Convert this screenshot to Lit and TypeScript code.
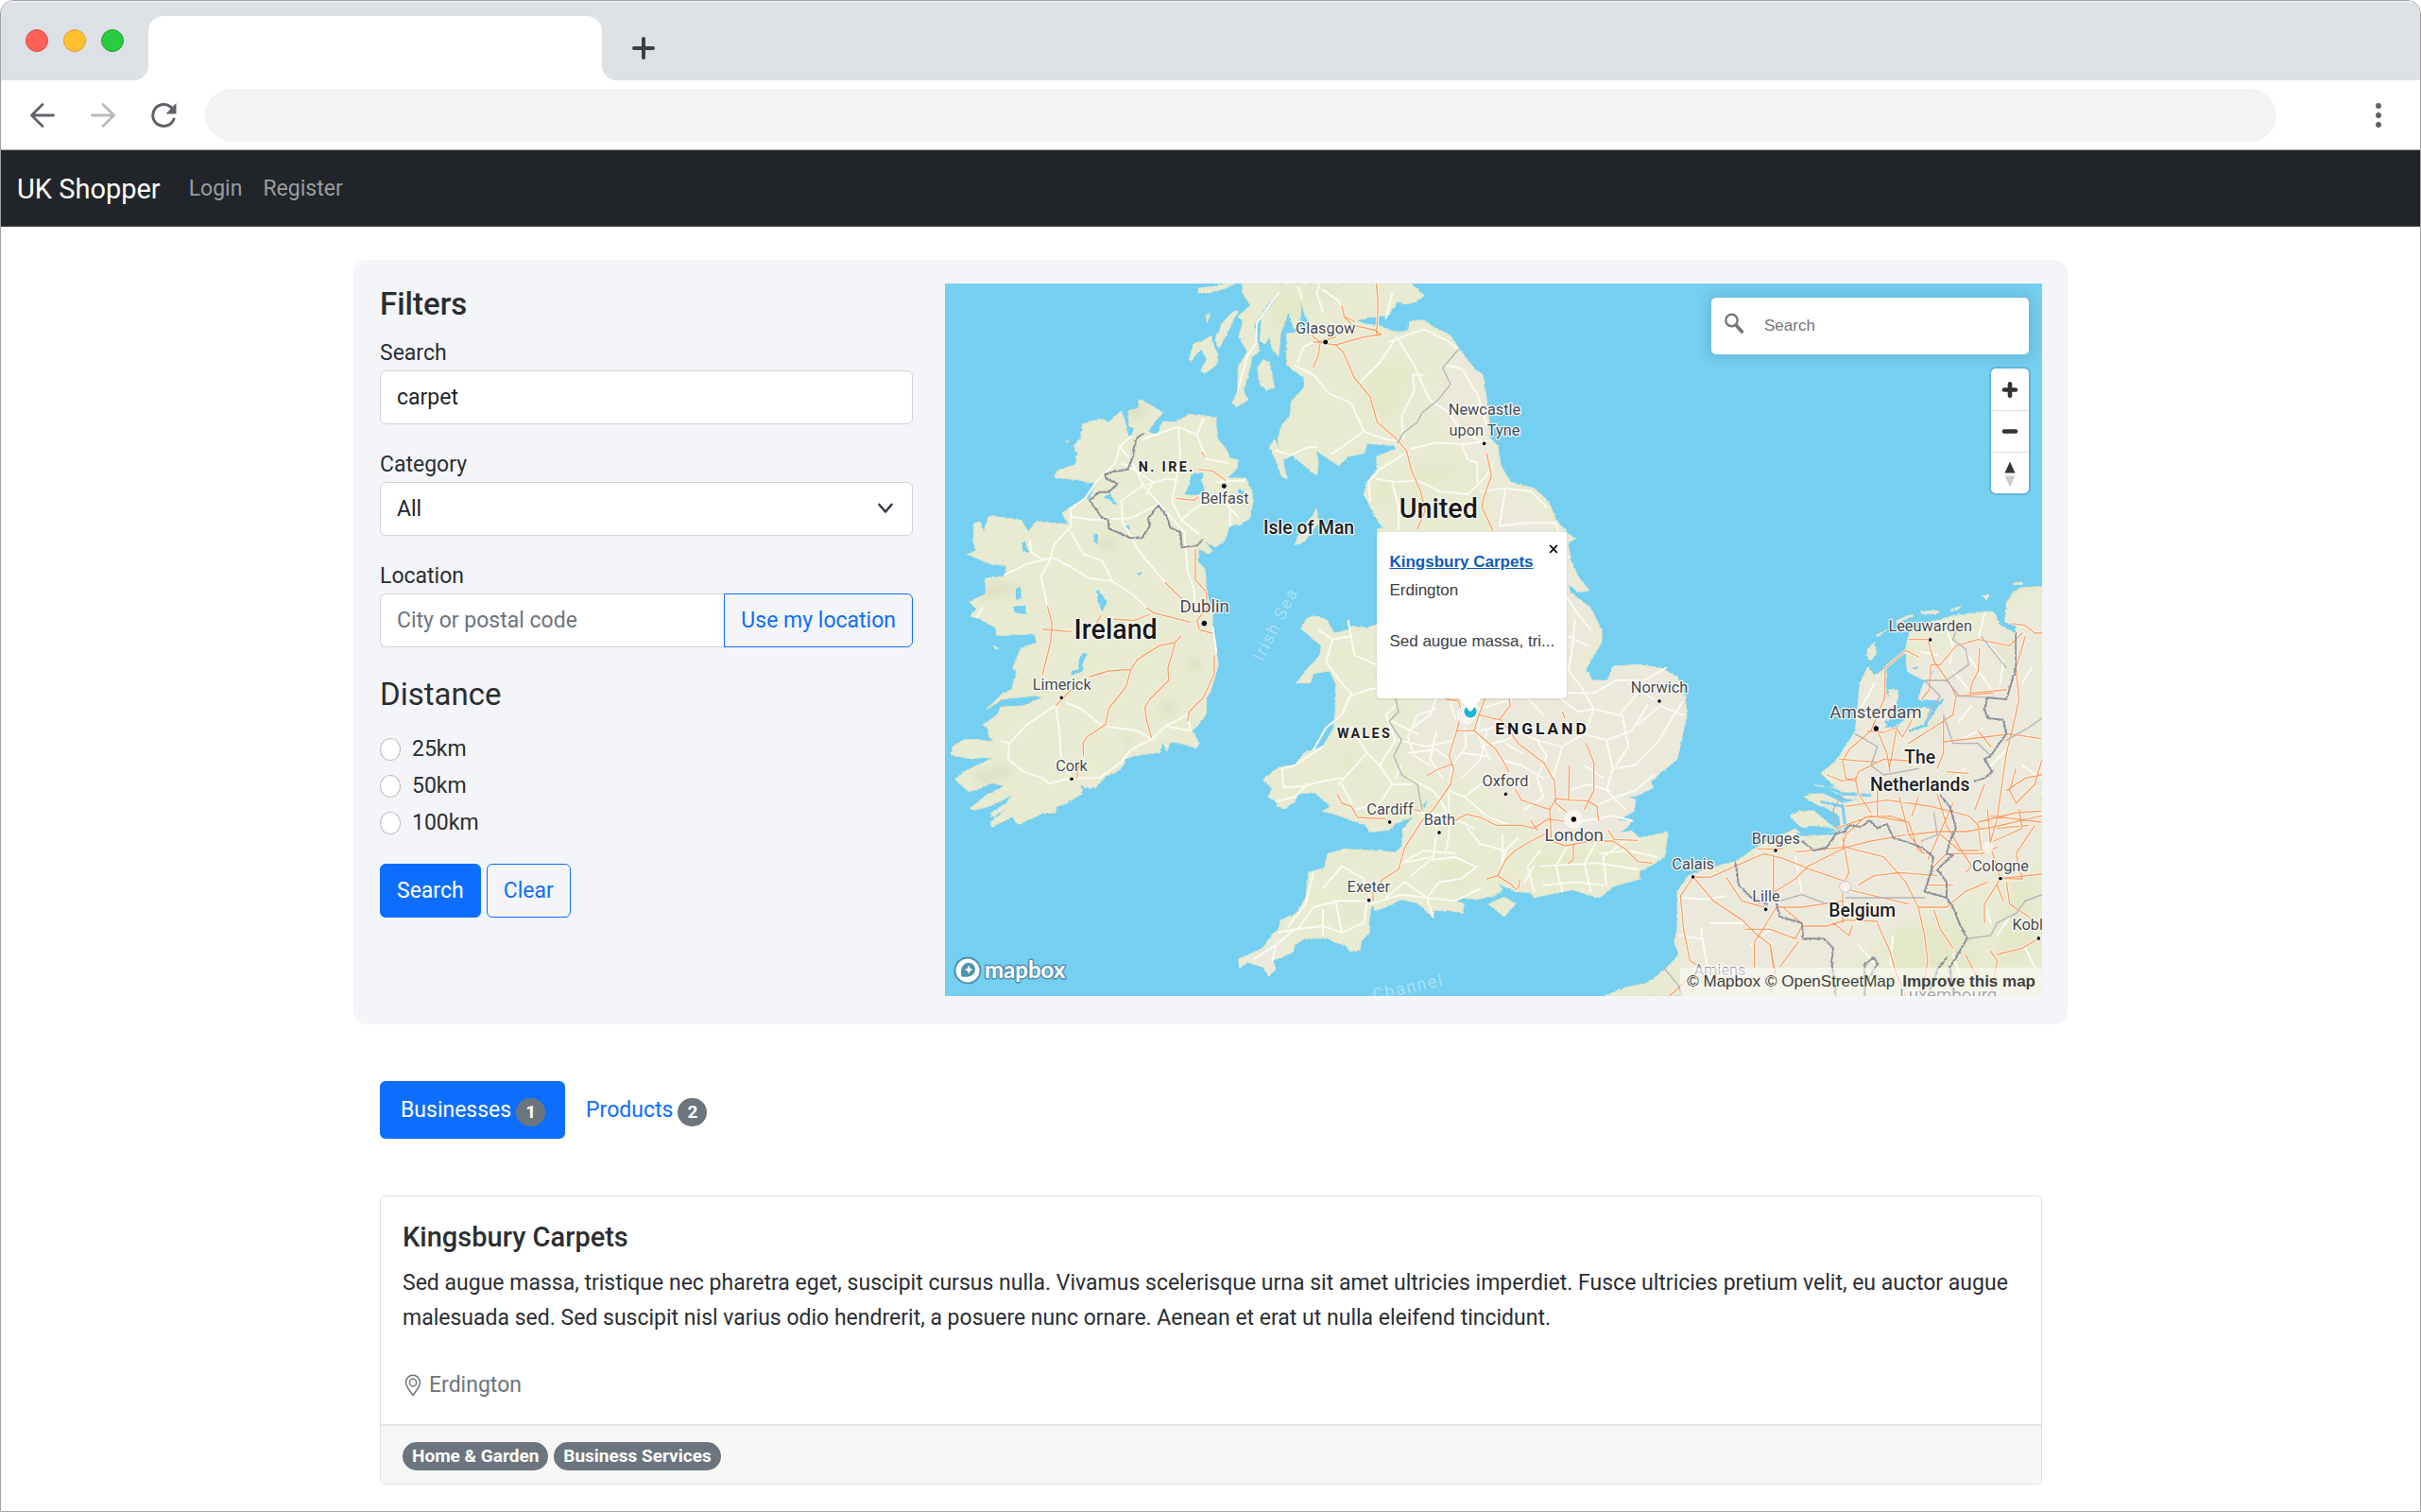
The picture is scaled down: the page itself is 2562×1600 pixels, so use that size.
import { LitElement, html, svg, css } from "lit";
import { customElement } from "lit/decorators.js";

type Kind = "city" | "big" | "isle" | "country" | "region" | "nation" | "faint";

interface MapLabel {
  text: string;
  x: number;
  y: number;
  kind: Kind;
}

const LABELS: MapLabel[] = [
  { text: "Glasgow", x: 1208, y: 188, kind: "city" },
  { text: "Newcastle", x: 1713, y: 448, kind: "city" },
  { text: "upon Tyne", x: 1713, y: 513, kind: "city" },
  { text: "N. IRE.", x: 704, y: 627, kind: "region" },
  { text: "Belfast", x: 888, y: 730, kind: "city" },
  { text: "Dublin", x: 824, y: 1075, kind: "big" },
  { text: "Ireland", x: 542, y: 1157, kind: "country" },
  { text: "Limerick", x: 371, y: 1320, kind: "city" },
  { text: "Cork", x: 402, y: 1577, kind: "city" },
  { text: "Isle of Man", x: 1155, y: 825, kind: "isle" },
  { text: "United", x: 1567, y: 774, kind: "country" },
  { text: "WALES", x: 1332, y: 1472, kind: "region" },
  { text: "ENGLAND", x: 1896, y: 1460, kind: "nation" },
  { text: "Norwich", x: 2268, y: 1328, kind: "city" },
  { text: "Oxford", x: 1779, y: 1625, kind: "city" },
  { text: "Cardiff", x: 1413, y: 1715, kind: "city" },
  { text: "Bath", x: 1570, y: 1748, kind: "city" },
  { text: "London", x: 1997, y: 1800, kind: "big" },
  { text: "Exeter", x: 1345, y: 1962, kind: "city" },
  { text: "Calais", x: 2375, y: 1890, kind: "city" },
  { text: "Bruges", x: 2638, y: 1808, kind: "city" },
  { text: "Lille", x: 2607, y: 1992, kind: "city" },
  { text: "Belgium", x: 2912, y: 2040, kind: "isle" },
  { text: "Cologne", x: 3351, y: 1895, kind: "city" },
  { text: "Koblenz", x: 3476, y: 2083, kind: "city" },
  { text: "The", x: 3095, y: 1555, kind: "isle" },
  { text: "Netherlands", x: 3095, y: 1640, kind: "isle" },
  { text: "Amsterdam", x: 2955, y: 1410, kind: "big" },
  { text: "Leeuwarden", x: 3128, y: 1135, kind: "city" },
  { text: "Amiens", x: 2460, y: 2225, kind: "faint" },
  { text: "Luxembourg", x: 3185, y: 2308, kind: "big" },
];

const DOTS: Array<[number, number, number]> = [
  [1208, 216, 9], [1712, 538, 7], [886, 673, 9], [823, 1109, 10], [370, 1345, 7],
  [402, 1603, 7], [2268, 1356, 7], [1780, 1651, 7], [1412, 1740, 7], [1569, 1773, 7],
  [1996, 1731, 10], [1346, 1988, 7], [2375, 1914, 7], [2637, 1830, 7], [2606, 2017, 7],
  [3351, 1919, 7], [3472, 2109, 7], [2956, 1443, 10], [3128, 1161, 7],
];

const IRELAND =
  "M615 397L660 420 692 440 665 470 645 500 672 512 690 468 730 470 780 445 860 455 865 520 895 560 905 585 930 590 928 615 898 648 955 648 975 690 978 720 968 775 935 797 903 798 888 845 860 868 825 850 850 880 838 888 805 872 805 915 825 935 830 1000 835 1030 850 1080 848 1130 862 1200 868 1240 845 1320 830 1345 830 1395 805 1430 785 1450 808 1490 800 1505 750 1490 715 1485 705 1515 690 1485 682 1520 665 1520 600 1530 570 1540 572 1555 545 1580 510 1595 480 1630 445 1632 430 1615 435 1650 385 1680 355 1690 350 1710 310 1712 230 1748 215 1722 150 1755 145 1740 205 1690 150 1725 145 1712 195 1680 212 1655 140 1690 100 1700 78 1698 130 1655 190 1625 150 1615 80 1645 60 1630 32 1605 60 1580 155 1535 80 1538 20 1528 25 1500 60 1478 100 1478 155 1485 140 1468 135 1440 122 1430 165 1400 175 1375 250 1370 310 1345 285 1338 180 1350 128 1385 185 1330 210 1320 228 1260 215 1250 240 1190 290 1170 285 1142 165 1148 160 1122 110 1095 80 1085 100 1065 78 1040 130 1015 128 965 190 960 195 925 150 922 70 890 100 880 90 850 92 792 112 785 122 820 140 768 240 780 265 818 290 785 395 795 370 760 400 738 460 710 478 665 430 655 345 645 360 622 415 605 420 570 410 545 432 520 437 475 490 460 520 470 560 435 575 480 583 520 560 545 585 528 602 490 585 482 582 435 615 425Z";

const BRITAIN =
  "M945 30L1480 30 1522 68 1495 88 1470 95 1435 88 1410 130 1340 140 1305 148 1330 158 1385 165 1415 180 1450 185 1472 178 1475 150 1520 145 1545 165 1605 195 1632 237 1680 300 1708 320 1718 385 1725 440 1730 520 1755 545 1765 610 1795 660 1870 680 1915 720 1940 780 1975 820 2000 840 1978 852 1985 905 2010 960 2045 1005 2010 1010 1978 980 1985 1010 2050 1060 2085 1130 2085 1170 2060 1210 2035 1255 2055 1290 2105 1290 2120 1245 2200 1240 2270 1250 2325 1280 2350 1340 2355 1400 2340 1470 2325 1540 2275 1580 2240 1612 2248 1630 2200 1655 2165 1660 2192 1668 2188 1705 2130 1735 2185 1735 2160 1762 2130 1775 2180 1768 2205 1790 2295 1772 2285 1850 2240 1878 2205 1895 2205 1920 2120 1945 2080 1980 1990 1955 1890 1975 1870 1980 1862 1965 1810 1960 1755 1935 1770 1955 1740 1975 1690 1985 1640 1980 1615 1990 1648 1998 1643 2030 1600 2020 1550 2020 1550 2042 1500 1997 1450 1985 1400 2010 1365 2020 1355 2000 1345 2060 1350 2085 1320 2120 1318 2145 1285 2150 1270 2130 1235 2120 1215 2108 1140 2110 1110 2130 1105 2152 1060 2172 1040 2180 1050 2205 1028 2230 1010 2200 960 2185 935 2205 932 2175 965 2160 1010 2140 1040 2095 1060 2080 1065 2050 1115 2030 1145 1980 1155 1900 1205 1885 1215 1840 1270 1825 1430 1835 1450 1820 1455 1760 1490 1720 1430 1745 1410 1765 1350 1770 1330 1745 1290 1735 1240 1715 1200 1705 1225 1690 1172 1645 1120 1650 1110 1675 1075 1698 1055 1690 1055 1675 1025 1660 1040 1635 1010 1605 1060 1565 1110 1560 1140 1520 1200 1500 1235 1440 1240 1380 1240 1300 1222 1260 1170 1268 1160 1298 1115 1298 1150 1255 1190 1210 1195 1180 1130 1125 1150 1092 1175 1085 1212 1098 1235 1140 1280 1130 1290 1118 1340 1122 1380 1110 1400 1050 1380 900 1372 810 1390 805 1360 760 1330 700 1340 660 1372 620 1370 580 1430 555 1428 545 1340 538 1332 568 1280 580 1250 608 1222 590 1178 560 1186 600 1180 640 1130 600 1102 575 1072 590 1085 650 1070 645 1050 590 1030 550 1045 525 1066 560 1055 530 1070 480 1095 450 1100 405 1140 360 1140 330 1085 290 1085 190 1130 183 1160 160 1140 125 1132 85 1125 170 1108 172 1090 120 1065 190 1060 260 1040 240 1030 200 1015 222 1000 210 1005 140 1060 70 1030 90 982 160 988 200 1000 245 975 262 965 310 948 370 963 400 925 422 912 410 930 370 930 300 960 245 932 200 947 150 930 135 970 100 945 60Z";

const EUROPE =
  "M2095 2292L2160 2265 2230 2250 2290 2205 2330 2160 2315 2120 2325 2080 2325 1960 2360 1910 2430 1885 2510 1865 2600 1805 2700 1762 2730 1785 2790 1775 2845 1765 2840 1720 2790 1690 2780 1670 2740 1650 2790 1650 2850 1680 2905 1668 2860 1665 2800 1630 2760 1622 2830 1630 2780 1585 2830 1545 2890 1450 2905 1300 2930 1245 2950 1275 2985 1255 2988 1330 3000 1352 3028 1325 3022 1365 2985 1440 3030 1445 3110 1430 3150 1370 3170 1358 3120 1350 3090 1350 3110 1290 3055 1262 3050 1190 3062 1140 3110 1110 3200 1085 3320 1070 3335 1080 3345 1112 3400 1142 3402 1115 3365 1105 3370 1045 3392 1010 3420 995 3483 992 3483 2292Z";

const ISLES = [
  "M790 220L820 212 845 195 855 235 865 250 865 285 825 316 812 305 832 270 815 240 795 255 780 280 778 265Z",
  "M930 115L905 170 870 235 857 205 885 150 915 120Z",
  "M805 45L850 40 895 30 920 32 890 45 830 62 805 60Z",
  "M830 130L842 122 832 155Z",
  "M1010 272L1030 280 1040 330 1046 360 1020 368 1000 350 992 300Z",
  "M1180 745L1186 790 1140 850 1110 860 1130 810 1165 770Z",
  "M1725 2000L1775 1978 1812 2000 1775 2040Z",
  "M2680 1720L2710 1706 2760 1705 2800 1740 2830 1762 2770 1750 2720 1757Z",
  "M2725 1660L2760 1652 2790 1680 2820 1690 2780 1690Z",
  "M2925 1210L2930 1190 2950 1170 2957 1205 2938 1228Z",
  "M3020 1100L3070 1080 3075 1085 3022 1108Z",
  "M3098 1070L3158 1070 3150 1078 3096 1078Z",
  "M3192 1065L3225 1055 3222 1063 3195 1070Z",
  "M3292 1022L3316 1018 3306 1035Z",
  "M3390 982L3422 980 3420 985 3390 986Z",
  "M2955 1147L2990 1130 2960 1152Z",
  "M2994 1320L3025 1320 3025 1345 3000 1352Z",
  "M3000 1450L3040 1420 3070 1392 3110 1375 3135 1385 3108 1430 3060 1450Z",
  "M385 530L392 528 390 536Z",
  "M150 1180L172 1188 165 1192Z",
];

const LAKES = [
  "M780 635L822 630 815 655 825 690 800 702 760 700 776 670Z",
  "M500 708L525 698 550 738 520 716Z",
  "M472 826L486 828 484 858 474 850Z",
  "M612 948L628 944 618 960Z",
  "M480 1003L492 1010 515 1040 498 1072 486 1040Z",
  "M225 1000L238 992 244 1030 225 1035Z",
  "M215 1056L256 1052 258 1080 222 1075Z",
  "M438 1204L452 1206 436 1240 440 1258 400 1275 402 1260 425 1255 425 1225Z",
  "M244 852L254 850 266 886 248 880Z",
  "M935 680L950 690 945 702 930 696Z",
  "M568 796L588 800 584 812Z",
  "M3072 1250L3090 1245 3080 1258Z",
  "M3125 1265L3140 1260 3132 1275Z",
  "M1518 1685L1532 1670 1524 1696Z",
];

const ROADS = [
  "M625 525L740 485 800 510 820 460M740 485L748 580 735 650 720 720 750 780 805 825M800 510L830 588 900 600M590 515L555 548 540 600 480 660 445 712 400 745 400 800 345 860 335 905 305 960 325 1055",
  "M555 548L590 590 630 670 680 730 590 775 470 780 400 770M680 730L760 820 770 940 790 1000 795 1080M630 670L560 720 565 790 620 885 700 980M400 820L440 890 500 910 530 975 600 1020 660 1080",
  "M190 955L260 920 340 900 400 930 455 965 530 975M270 850L275 885 310 905M100 1090L120 1060M350 1370L260 1430 205 1490 180 1482M205 1490L200 1540 250 1580 310 1600 330 1618 400 1600 490 1600 560 1550 590 1510 660 1475 700 1435 770 1400 780 1450M385 1360L430 1380 500 1435 610 1450 655 1475M352 1370L362 1440 368 1530 395 1590M700 1435L775 1450M640 670L700 650 740 655M750 780L800 740 870 700 900 740 930 770M905 730L905 800M640 700L660 660 600 620 560 600M860 660L950 655M850 1120L862 1200",
  "M1200 50L1250 85 1265 120M1400 140L1420 60M1135 80L1120 40M1170 320L1110 290M1120 280L1140 230 1185 210M1170 320L1220 380 1290 410 1330 500M1200 120L1180 60 1190 30M1435 200L1380 280 1320 340M1435 200L1490 290 1520 360 1540 400 1600 440 1640 500 1700 530M1520 320L1485 320 1490 370 1450 450 1455 520M1410 215L1520 175 1600 215 1632 240M1590 290L1640 300 1690 380 1720 480M1480 555L1560 535 1650 540 1720 530M1460 570L1380 620 1345 660 1350 720M1330 500L1230 570M1330 500L1400 525 1440 530M1370 650L1430 660 1500 655 1570 690 1660 700 1720 640 1740 600M1640 540L1660 590 1690 600 1690 660M1700 690L1780 680 1860 690 1910 740M1780 680L1760 800M1760 800L1850 790 1935 790 1950 820M1900 850L1980 900M1970 1020L2010 1080 2050 1130M1050 560L1100 575 1150 550 1180 550M1060 60L990 155 988 220 960 260 930 370M1420 660L1440 740 1440 810",
  "M1185 1130L1230 1160 1210 1230 1260 1300 1290 1330 1280 1350M1280 1100L1300 1210 1370 1240M1230 1160L1290 1150M1290 1340L1340 1320 1400 1310M1290 1330L1260 1400 1210 1440 1170 1510M1200 1500L1110 1560 1070 1570M1070 1570L1075 1630 1140 1625 1200 1610 1260 1600M1050 1675L1110 1660 1150 1620M1250 1620L1340 1520 1380 1560 1420 1620 1480 1620M1340 1520L1290 1440M1380 1560L1430 1480 1400 1400 1430 1370M1420 1620L1380 1680 1300 1700M1260 1620L1290 1680",
  "M1620 1410L1600 1340M1650 1440L1655 1500 1610 1560 1600 1640 1650 1660M1560 1380L1500 1400 1470 1470 1490 1530 1540 1560M1470 1520L1560 1510 1600 1540M1470 1600L1550 1640 1590 1700 1560 1760M1650 1660L1700 1620 1760 1600M1650 1660L1720 1720 1790 1750M1700 1400L1690 1460 1730 1540M1800 1440L1880 1480 1910 1530 1880 1600 1900 1660M1880 1480L1960 1500 2030 1460 2100 1480 2180 1450 2230 1370M1960 1500L1930 1600 1950 1700M2030 1460L2060 1380 2020 1310 1980 1260M1980 1330L2060 1330 2130 1290 2220 1290 2290 1250M2060 1380L2140 1400 2200 1330M2100 1480L2120 1570 2100 1640 2160 1700M2120 1570L2190 1560 2260 1490 2340 1360M2270 1370L2340 1400M2270 1370L2200 1430M2170 1300L2250 1350M2060 1690L2130 1660 2190 1640 2250 1590M2000 1740L2060 1730 2120 1720 2180 1735M1900 1600L1830 1560 1760 1540M1900 1660L1840 1700M1760 1900L1780 1830 1820 1790M1780 1830L1700 1810 1660 1760M1690 1880L1640 1920 1570 1930 1530 1980M1770 1780L1770 1900M1480 1910L1540 1860 1620 1850 1680 1880M1400 1980L1460 1930 1530 1980 1550 2040M1530 1980L1620 1990 1700 1950M1450 1870L1520 1830 1620 1840M1560 1780L1550 1850 1450 1870M1350 2000L1450 1970 1530 1980M1260 1880L1330 1920 1350 1980M1260 1880L1200 1950M1170 1900L1145 2000 1090 2070M1170 2010L1250 1990 1340 1990M1170 2010L1120 2080M980 2175L1050 2130 1110 2080 1200 2070 1260 2090 1330 2060 1340 1990M1050 2130L1040 2180M1110 2080L1060 2090M1200 2020L1200 2100M1240 1990L1260 2090M1600 1650L1600 1780 1590 1830M1870 1960L1850 1880 1890 1830M1960 1960L1940 1880 1980 1810M2050 1960L2030 1870 2070 1800M1890 1880L2070 1870 2200 1890M2100 1940L2090 1850 2160 1800M1870 1880L1840 1930M2080 1840L2170 1830 2260 1850M1900 1940L2000 1930 2090 1940M1500 1710L1600 1720 1680 1760",
  "M1640 1340L1700 1380 1800 1350M1560 1345L1540 1400 1470 1450M1850 1345L1900 1400M1950 1345L2010 1390 2060 1380M1420 1420L1500 1460M1440 1480L1530 1500 1620 1480M1560 1450L1540 1540 1580 1600M1720 1450L1700 1540 1640 1600M1780 1490L1830 1520M2150 1400L2170 1500 2130 1560M1450 1560L1430 1600M1980 1640L2040 1620 2110 1640M2030 1560L2090 1600M1980 1150L2040 1180M2000 1100L1990 1200 1980 1260M1700 1500L1780 1480 1860 1440M1660 1460L1740 1440M1640 1520L1720 1530",
  "M2430 2060L2540 2060M2340 1980L2410 1985 2480 1975M2400 2080L2420 2200M2330 2100L2400 2110M2620 2080L2560 2130M2700 1850L2720 1960M2880 1990L2800 2040M2900 2130L2960 2200M3010 2100L3000 2190 3040 2240M3180 1130L3200 1180 3190 1240M3290 1150L3360 1230 3350 1300M3240 1200L3330 1330M3300 1080L3280 1160M3200 1260L3260 1330M3100 1200L3150 1210M3420 1300L3450 1250M3260 1370L3220 1420M3300 1440L3220 1480M3240 1570L3180 1620M3380 1500L3320 1560M3420 1560L3480 1600M3300 2000L3320 2060M3380 2040L3340 2100M3430 2140L3460 2200M3200 2160L3230 2250M2900 1390L2930 1340 2950 1300",
];

const MOTORWAYS = [
  "M815 565L825 580M805 620L850 625 890 655M735 712L790 718 805 708M795 875L795 970 830 1010 832 1060 800 1100 808 1130 848 1140M700 980L730 1010 790 1065M325 1055L340 1110 335 1170 310 1270M312 1128L400 1135M640 1060L660 1075 780 1105M460 1278L520 1260 590 1255 610 1225 640 1205 680 1180 730 1170 750 1148M590 1255L575 1310 520 1380 510 1430 450 1470 438 1490 440 1530M730 1175L708 1250 710 1290 650 1350 635 1375 640 1415 655 1470M855 1210L855 1270 820 1345 775 1390 770 1418M352 1370L400 1320M418 1600L425 1560M535 1095L600 1100 650 1080M480 1110L495 1085",
  "M1370 30L1375 100 1370 190M1260 100L1268 135 1300 150M1268 135L1290 160 1370 180 1385 192 1330 200 1240 225 1170 215M1240 225L1265 250 1300 330 1350 390 1372 470 1430 520 1465 560 1480 620 1510 690 1525 750 1500 810M1190 225L1185 260 1170 295M1165 195L1190 215 1240 200M1720 570L1735 640 1710 710 1705 740 1740 815",
  "M1590 1350L1630 1355 1640 1390 1625 1450 1600 1530 1615 1570 1605 1620 1550 1700 1515 1735 1460 1820 1440 1890 1385 1925 1380 1960M1360 1990L1358 1960M1610 1555L1560 1575 1530 1592M1625 1450L1680 1450 1750 1510 1780 1560 1790 1580M1680 1450L1695 1400 1760 1415 1795 1370 1790 1345M1695 1400L1715 1345M1765 1415L1820 1490 1900 1550 1935 1610 1940 1680 1975 1710M1620 1735L1655 1715 1700 1725 1750 1750 1830 1750 1870 1760 1915 1730 1970 1738M1880 1765L1860 1735M1810 1635L1830 1670 1920 1700 1925 1800 1970 1815 2050 1800 2120 1800 2160 1825 2200 1865 2245 1870M1920 1700L1940 1665 1980 1670 2040 1672 2070 1690 2075 1735M1980 1670L1982 1560M2030 1700L2060 1640 2060 1550 2035 1490M1910 1775L1860 1800 1810 1830 1780 1860 1755 1910 1720 1920M1755 1910L1800 1940 1815 1955M1825 1925L1820 1950M1995 1815L1995 1860 1980 1870M2105 1765L2125 1795 2200 1798M1245 1650L1260 1680 1290 1690 1310 1725 1400 1730M1490 1700L1510 1705M1960 1390L1968 1410",
  "M2375 1914L2335 1975 2345 2080 2365 2180 2400 2200 2300 2292M2375 1914L2430 1915 2530 1870 2600 1840 2660 1855 2760 1895 2850 1925 2870 1955 3060 2000M2375 1914L2440 1990 2530 2050 2570 2090 2620 2130 2630 2200M2480 1915L2530 1990 2600 2010M2640 2010L2720 2010 2850 1990M2630 1850L2630 1960M2620 1970L2700 1920 2740 1880 2860 1820M2580 1825L2660 1825M2700 1835L2850 1820 2860 1780 2920 1725 3000 1720 3060 1740 3090 1830 3110 1840M2850 1790L2870 1900 2850 1940 2850 2060M2860 1820L2940 1800 3050 1780M2860 1820L2980 1850 3050 1930 3090 2010M2900 1940L2950 1910 3030 1900 3150 1910M3090 2010L3110 2100 3120 2180 3100 2292M3090 2010L3180 2010 3240 1960 3310 1930M3140 2020L3160 2080 3200 2140M2640 2010L2590 2090 2570 2120 2570 2200M2540 2080L2620 2080 2700 2110 2720 2070 2800 2070 2860 2050 2960 2055M2820 2060L2870 2100 2880 2070M2960 2060L3000 2150 3020 2220 3050 2292M2620 2130L2640 2240M2650 2200L2710 2120M2400 2200L2450 2230M2660 2010L2720 2060",
  "M2983 1350L2985 1250 3050 1195 3090 1215M2985 1340L2940 1450 2870 1510 2850 1545 2860 1600 2890 1610 2900 1580 2980 1540 3060 1545M3060 1160L3120 1160 3140 1230 3190 1300 3210 1340 3200 1400 3060 1490M2930 1450L2980 1455 3020 1440 3040 1470 3090 1380M2965 1460L2990 1520 3000 1580M3020 1450L3000 1560M3130 1240L3160 1240 3210 1180 3280 1160 3380 1180 3420 1140M3130 1240L3125 1320 3100 1350M3285 1190L3280 1260 3260 1300 3255 1330 3370 1320M3210 1340L3330 1330M3430 1150L3400 1250 3410 1350 3390 1440 3370 1520 3340 1730 3320 1800M2840 1540L2960 1550M3170 1410L3170 1520 3150 1570M3170 1485L3300 1470 3380 1460 3480 1475M3280 1450L3320 1500M2800 1590L2850 1610 2890 1600 2900 1650 2940 1710M2860 1690L2990 1670 3130 1690 3250 1720 3280 1750 3290 1830M2830 1760L2940 1720 3060 1740M3060 1780L3150 1770 3240 1770 3330 1755 3480 1720M3030 1660L3050 1740 3060 1780 3100 1830M2960 1720L2960 1620M3090 1660L3070 1720M3150 1650L3180 1750 3220 1820 3260 1880 3240 1900M3130 1890L3180 1840 3290 1840 3340 1820M3280 1740L3400 1710 3480 1705M3310 1700L3320 1820 3350 1919M3410 1700L3420 1760 3330 1800M3460 1750L3400 1840 3420 1920 3360 1919M3351 1919L3480 1905M3351 1919L3300 2000 3300 2060M3370 1930L3380 2000 3440 2040 3480 2070M3340 1940L3360 1990M3390 1110L3430 1115 3460 1140 3483 1140M3300 1620L3270 1700M3400 1570L3380 1640 3400 1680M3483 1540L3460 1620 3400 1680M3180 1580L3250 1585M3200 1680L3120 1860M3160 1780L3220 1830 3280 1830M3120 1940L3200 1940M3320 2150L3340 2180 3320 2292M3340 2160L3420 2140 3472 2109M3240 2160L3280 2240M3370 1640L3430 1600 3480 1590M3320 1720L3480 1740M3340 1760L3440 1750",
];

const BORDERS =
  "M632 505L610 520 600 550 597 580 580 620 530 628 508 636 512 650 548 665 520 692 490 692 458 718 500 775 518 780 520 808 560 825 590 838 625 838 650 800 645 775 678 735 705 770 715 805 748 820 752 868 800 862 815 845M2510 1870L2520 1940 2560 1980 2610 2000M2640 2000L2650 2040 2720 2060 2725 2110 2790 2110 2820 2140 2815 2180 2828 2292M3400 1140L3400 1250 3370 1350 3310 1345 3300 1380 3310 1410 3360 1415 3370 1460 3340 1500 3320 1530 3300 1540 3325 1580 3300 1600 3270 1610M2720 1800L2760 1830 2800 1820 2830 1775 2860 1770 2870 1750 2910 1755 2935 1735 2960 1760 2990 1745 3010 1790 3060 1805 3100 1820 3138 1850 3130 1900 3110 1960 3180 1980 3200 2010 3220 2060 3245 2110 3210 2170 3190 2200 3200 2292M3160 1655L3190 1690 3210 1760 3190 1800 3180 1840 3200 1845 3150 1890 3180 1930 3180 1980M3180 2170L3150 2210 3120 2292M2920 2292L2920 2190 2950 2170 2960 2190 2930 2240";

const REGIONAL =
  "M1632 237L1580 298 1605 350 1565 400 1515 440 1500 470 1455 505 1438 535M1430 1345L1440 1390 1410 1420 1450 1480 1425 1530 1450 1590 1500 1620 1515 1700M3210 1130L3200 1160 3240 1190 3250 1240 3180 1290 3110 1290M3180 1290L3220 1340 3330 1345M3290 1150L3370 1250M3170 1400L3200 1490 3280 1490 3320 1530M2890 1460L2960 1500 2940 1560 2980 1590 3090 1570M2650 1990L2720 1970 2800 2000M2860 1980L3000 1980 3110 1980M3240 2110L3320 2100 3340 2060 3400 2030 3430 1990 3483 1970M3370 1480L3440 1440 3483 1410M3140 1710L3150 1780 3100 1800M3110 1290L3160 1340 3120 1400M2850 1650L2820 1700 2830 1760M2280 2200L2330 2260 2340 2292";

@customElement("shop-map")
class ShopMap extends LitElement {
  static styles = css`
    :host {
      display: block;
      position: relative;
      overflow: hidden;
      font-family: "Liberation Sans", Arial, sans-serif;
      font-size: 17px;
      color: #404040;
    }
    * { box-sizing: border-box; }
    .canvas { display: block; width: 100%; height: auto; background: #75cff0; }
    .label { font-family: Roboto, "Noto Sans", sans-serif; text-anchor: middle; paint-order: stroke; stroke: rgba(255, 255, 255, 0.85); stroke-width: 8px; stroke-linejoin: round; fill: #4a4b50; }
    .city { font-size: 49px; }
    .big { font-size: 56px; }
    .isle { font-size: 58px; font-weight: 500; fill: #222; }
    .country { font-size: 86px; font-weight: 500; fill: #181818; }
    .region { font-size: 43px; font-weight: 700; letter-spacing: 7px; fill: #222; }
    .nation { font-size: 52px; font-weight: 700; letter-spacing: 9px; fill: #181818; }
    .faint { font-size: 49px; fill: #8e8e8e; }
    .sea { font-family: Roboto, "Noto Sans", sans-serif; font-size: 54px; letter-spacing: 5px; fill: #a9e0f6; }
    .geocoder {
      position: absolute; top: 15px; right: 14px; width: 336px; height: 60px;
      display: flex; align-items: center; gap: 22px; padding: 0 14px;
      background: #fff; border-radius: 5px; box-shadow: 0 0 14px 3px rgba(0, 0, 0, 0.12);
    }
    .geocoder svg { flex: none; width: 20px; height: 22px; margin-bottom: 6px; }
    .geocoder input { flex: 1; min-width: 0; border: 0; outline: 0; padding: 0; background: none; font: inherit; color: #404040; }
    .geocoder input::placeholder { color: #757575; opacity: 1; }
    .controls {
      position: absolute; top: 90px; right: 14px; width: 40px;
      display: flex; flex-direction: column; background: #fff; border-radius: 5px;
      box-shadow: 0 0 0 2px rgba(0, 0, 0, 0.12);
    }
    .controls button { height: 44px; padding: 0; border: 0; background: none; display: grid; place-items: center; }
    .controls button + button { border-top: 1px solid #ddd; }
    .controls svg { width: 40px; height: 43px; }
    .popup {
      position: absolute; left: 39.4%; top: 263px; width: 201px; height: 176px;
      padding: 17px 13px; background: #fff; border-radius: 4px;
      box-shadow: 0 1px 3px rgba(0, 0, 0, 0.12); line-height: 30px; white-space: nowrap;
    }
    .popup a { display: block; font-weight: 700; color: #0f5bbd; text-decoration: underline; }
    .popup p { margin: 0 0 24px; }
    .popup button { position: absolute; top: 8px; right: 4px; width: 20px; height: 20px; padding: 0; border: 0; background: none; }
    .popup button svg { display: block; width: 20px; height: 20px; }
    .tip { position: absolute; left: 87px; top: 175px; width: 24px; height: 24px; }
    .logo { position: absolute; left: 8px; bottom: 11px; width: 124px; height: 34px; }
    .wordmark { font-family: Lato, Roboto, sans-serif; font-weight: 700; font-size: 24px; fill: #fff; stroke: #4f93ae; stroke-width: 3px; paint-order: stroke; stroke-linejoin: round; }
    .credits {
      position: absolute; right: 0; bottom: 0; height: 30px; padding: 0 7px;
      display: flex; align-items: center; gap: 8px; line-height: 24px;
      background: rgba(255, 255, 255, 0.5); white-space: nowrap;
    }
    .credits a { color: #404040; text-decoration: none; }
    .credits .owners { display: flex; gap: 5px; }
    .credits .improve { font-weight: 700; }
  `;

  render() {
    return html`
      <svg class="canvas" viewBox="0 30 3483 2262" role="img" aria-label="Map of the British Isles">
        <defs>
          <filter id="coast" x="0" y="0" width="1" height="1">
            <feTurbulence type="fractalNoise" baseFrequency="0.12" numOctaves="2" seed="4" result="n" />
            <feDisplacementMap in="SourceGraphic" in2="n" scale="9" xChannelSelector="R" yChannelSelector="G" />
          </filter>
          <filter id="soft"><feGaussianBlur stdDeviation="14" /></filter>
          <clipPath id="land"><path d=${BRITAIN} /><path d=${IRELAND} /><path d=${EUROPE} /></clipPath>
        </defs>
        <g filter="url(#coast)">
          <rect x="0" y="30" width="3483" height="2262" fill="#75cff0" />
          <g fill="#e8ebd1" stroke="#dfe6cf" stroke-width="3">
            <path d=${IRELAND} /><path d=${BRITAIN} /><path d=${EUROPE} />
            ${ISLES.map((d) => svg`<path d=${d} />`)}
          </g>
          <g clip-path="url(#land)">
            <g filter="url(#soft)" fill="#ebe9db">
              <path d="M1740 1270L2360 1230 2360 1600 2180 1800 1900 1800 1700 1620 1480 1560 1500 1350Z" />
              <path d="M1640 220L1700 330 1760 640 1960 820 2080 1150 1940 1300 1740 820 1760 640 1640 560 1560 400Z" />
              <path d="M2330 1930L2800 1800 2900 1300 3300 1130 3483 1020 3483 1850 3150 2000 2700 2292 2330 2200Z" />
              <path d="M1050 2100L940 2200 1040 2230 1100 2130Z" />
            </g>
            <g filter="url(#soft)" fill="#dfe5bf" opacity=".45">
              <path d="M1030 50L1200 60 1140 110 1040 200Z" /><path d="M1360 300L1480 280 1420 470 1330 420Z" />
              <path d="M1480 620L1640 580 1600 640 1500 690Z" /><path d="M1400 640L1430 700 1390 760 1350 700Z" />
              <path d="M1260 1160L1290 1220 1250 1260Z" /><path d="M1280 1500L1340 1590 1260 1560Z" />
              <path d="M1260 1990L1330 2020 1260 2080Z" /><path d="M1800 1850L2000 1840 2180 1850 1900 1900Z" />
              <path d="M3000 2080L3240 2060 3300 2292 3020 2292Z" /><path d="M3330 1180L3390 1140 3380 1300Z" />
              <path d="M3080 1400L3160 1380 3160 1480Z" /><path d="M3380 1940L3470 1930 3440 2180 3330 2200Z" />
              <path d="M1540 1880L1700 1840 1640 1960Z" />
            </g>
            <g filter="url(#soft)" fill="#d9d9bb" opacity=".7">
              <path d="M140 980L240 990 220 1010 120 1030Z" /><path d="M760 1210L810 1230 800 1270Z" />
              <path d="M90 1590L210 1560 200 1590 110 1620Z" /><path d="M560 1470L600 1480 590 1510Z" />
              <path d="M690 1360L740 1370 700 1410Z" /><path d="M470 850L550 840 520 880Z" />
              <path d="M570 420L650 420 610 470Z" /><path d="M1170 45L1250 50 1220 70Z" />
            </g>
          </g>
          <g fill="#75cff0">${LAKES.map((d) => svg`<path d=${d} />`)}</g>
          <g fill="none" stroke="#75cff0" stroke-width="9">
            <path d="M2790 1622L2850 1650 2940 1655M2780 1675L2850 1690 2860 1770M3110 1430L3150 1370 3170 1350M3060 1450L3120 1430M2700 1780L2830 1775M2985 1420L3025 1440" />
          </g>
        </g>
        <g fill="none" stroke-linejoin="round" stroke-linecap="round">
          <path d=${ROADS.join("")} stroke="#fbfaf3" stroke-width="6" />
          <path d=${MOTORWAYS.join("")} stroke="#fdf6ea" stroke-width="9" />
          <path d=${MOTORWAYS.join("")} stroke="#f6a06a" stroke-width="4" />
          <path d=${REGIONAL} stroke="#b3b4b8" stroke-width="4" />
          <path d=${BORDERS} stroke="#8d8f99" stroke-width="6" filter="url(#coast)" />
        </g>
        <g fill="#fbf8f2" opacity=".8">
          <circle cx="1996" cy="1731" r="30" /><circle cx="1655" cy="1400" r="30" />
          <circle cx="2858" cy="1945" r="20" /><circle cx="3310" cy="1820" r="18" />
        </g>
        <circle cx="2858" cy="1945" r="18" fill="none" stroke="#cfcfd2" stroke-width="4" />
        <circle cx="2567" cy="112" r="16" fill="none" stroke="#a9e0f6" stroke-width="5" />
        <text class="sea" transform="translate(1008 1232) rotate(-63)">Irish Sea</text>
        <text class="sea" transform="translate(1362 2308) rotate(-13)">Channel</text>
        ${DOTS.map(([x, y, r]) => svg`<circle cx=${x} cy=${y} r=${r} fill="#000" stroke="#fff" stroke-width="3" />`)}
        ${LABELS.map((l) => svg`<text class="label ${l.kind}" x=${l.x} y=${l.y}>${l.text}</text>`)}
      </svg>

      <label class="geocoder">
        <svg viewBox="0 0 20 22" fill="none" stroke="#757575" aria-hidden="true">
          <circle cx="7.5" cy="8" r="6.2" stroke-width="2.4" />
          <path d="M12 13l6.4 7" stroke-width="3.6" stroke-linecap="round" />
        </svg>
        <input type="text" placeholder="Search" aria-label="Search the map" />
      </label>

      <div class="controls">
        <button aria-label="Zoom in">
          <svg viewBox="0 0 40 43" stroke="#333" stroke-width="4.6" stroke-linecap="round"><path d="M14 21.5h12M20 15.2v12.6" /></svg>
        </button>
        <button aria-label="Zoom out">
          <svg viewBox="0 0 40 43" stroke="#333" stroke-width="4.6" stroke-linecap="round"><path d="M14 21.5h12" /></svg>
        </button>
        <button aria-label="Reset bearing to north">
          <svg viewBox="0 0 40 43"><path d="M14.500 21.500L20 9.500 25.500 21.500z" fill="#333" /><path d="M14.500 24.500L20 36.500 25.500 24.500z" fill="#ccc" /></svg>
        </button>
      </div>

      <div class="popup">
        <button aria-label="Close popup">
          <svg viewBox="0 0 20 20" stroke="#000" stroke-width="1.800"><path d="M6.200 6l7.600 8M13.800 6l-7.600 8" /></svg>
        </button>
        <a href="#kingsbury-carpets">Kingsbury Carpets</a>
        <p>Erdington</p>
        <div>Sed augue massa, tri...</div>
        <svg class="tip" viewBox="0 0 24 24" aria-hidden="true">
          <circle cx="12" cy="15" r="6.500" fill="#1cb4da" />
          <path d="M0 0h24L13.500 14q-1.500 1.500-3 0z" fill="#fff" />
        </svg>
      </div>

      <svg class="logo" viewBox="0 0 124 34" role="img" aria-label="Mapbox">
        <circle cx="16" cy="18" r="13.500" fill="#fff" stroke="#4f93ae" stroke-width="2" />
        <path d="M9.500 24.500c-1-4-.8-9 2-12.300 3-3.300 8-3.200 10.600-.2 2.800 3.200 2.400 7.600-.6 10.300-3 2.600-7.800 3-12 2.200z" fill="#4f93ae" />
        <path d="M17.200 12.500l1.300 3.200 3 1.400-3 1.400-1.300 3.200-1.300-3.200-3-1.400 3-1.400z" fill="#fff" />
        <text class="wordmark" x="34" y="26">mapbox</text>
      </svg>

      <div class="credits">
        <span class="owners"><a href="#mapbox">© Mapbox</a><a href="#osm">© OpenStreetMap</a></span>
        <a class="improve" href="#improve">Improve this map</a>
      </div>
    `;
  }
}

@customElement("app-root")
class AppRoot extends LitElement {
  static styles = css`
    :host { display: block; font-family: Roboto, "Noto Sans", sans-serif; font-size: 23px; line-height: 36px; color: #2b2e31; }
    * { box-sizing: border-box; }
    h2, h3, p, fieldset, ul { margin: 0; padding: 0; border: 0; font-weight: 400; }
    button, input, select { font: inherit; color: inherit; margin: 0; }
    .window { min-height: 100vh; border: 1px solid #a3a3a5; border-radius: 14px 14px 0 0; background: #fff; overflow: hidden; }

    .tabstrip { display: flex; align-items: flex-end; height: 84px; background: #dde0e5; box-shadow: inset 0 2px 0 #eceef1; }
    .lights { display: flex; gap: 16px; align-self: center; padding: 0 25px 0 26px; }
    .strip-left { display: flex; align-self: stretch; width: 156px; }
    .light { width: 24px; height: 24px; border-radius: 50%; border: 1px solid; }
    .close { background: #ff6159; border-color: #e24942; }
    .min { background: #ffbf2f; border-color: #dea032; }
    .max { background: #2aca41; border-color: #1fa52f; }
    .tab { position: relative; width: 480px; height: 68px; background: #fff; border-radius: 16px 16px 0 0; }
    .tab::before, .tab::after { content: ""; position: absolute; bottom: 0; width: 16px; height: 16px; }
    .tab::before { left: -16px; background: radial-gradient(circle at 0 0, transparent 16px, #fff 16px); }
    .tab::after { right: -16px; background: radial-gradient(circle at 100% 0, transparent 16px, #fff 16px); }
    .icon { display: grid; place-items: center; width: 44px; height: 44px; padding: 0; border: 0; background: none; }
    .icon svg { width: 28px; height: 28px; }
    .newtab { margin: 0 0 12px 22px; }

    .toolbar { display: flex; align-items: center; height: 74px; padding: 0 22px; border-bottom: 1px solid #acacae; }
    .toolbar .icon + .icon { margin-left: 20px; }
    .address { flex: 1; height: 56px; margin: 0 86px 0 22px; padding: 0 28px; border: 0; border-radius: 28px; background: #f1f3f5; outline: 0; }

    .navbar { display: flex; align-items: center; height: 81px; padding: 2px 17px 0; background: #212529; border-bottom: 1px solid #4b4a50; }
    .navbar a { color: #9a9c9e; text-decoration: none; }
    .navbar .brand { font-size: 29px; color: #fff; margin-right: 30px; }
    .navbar .brand + a { margin-right: 22px; }

    .page { max-width: 1814px; margin: 35px auto 28px; }
    .panel { display: grid; grid-template-columns: minmax(0, 564fr) minmax(0, 1161fr); gap: 34px; padding: 25px 27px 30px 28px; border-radius: 14px; background: #f4f5f9; align-items: start; }
    .heading { font-size: 33px; line-height: 44px; }
    .strong { font-weight: 500; margin-bottom: 12px; }
    .field { display: block; margin-bottom: 25px; }
    .field label { display: block; }
    .control { display: block; width: 100%; height: 57px; padding: 0 17px; border: 1px solid #ced4da; border-radius: 6px; background: #fff; color: #212529; outline: 0; }
    .control::placeholder { color: #6c757d; opacity: 1; }
    .choice { position: relative; display: block; }
    .choice select { appearance: none; }
    .choice svg { position: absolute; right: 20px; top: 20px; width: 18px; height: 16px; pointer-events: none; }
    .joined { display: flex; }
    .joined .control { border-radius: 6px 0 0 6px; border-right: 0; flex: 1; min-width: 0; }
    .joined .button { border-radius: 0 6px 6px 0; }
    .button { height: 57px; padding: 0 17px; border: 1px solid #0d6efd; border-radius: 6px; background: none; color: #0d6efd; white-space: nowrap; }
    .filled { background: #0d6efd; color: #fff; }
    .distance { margin-top: 28px; }
    .distance legend { padding: 0; margin-bottom: 18px; }
    .radio { display: flex; align-items: center; gap: 12px; margin-bottom: 3px; }
    .radio input { appearance: none; width: 22px; height: 24px; border: 1px solid #bfbfbf; border-radius: 50%; background: #fff; }
    .actions { display: flex; gap: 6px; margin-top: 22px; }

    .results { padding: 0 27px 0 28px; }
    .tabs { display: flex; margin-top: 60px; margin-bottom: 60px; }
    .pill { display: flex; align-items: center; gap: 5px; height: 61px; padding: 0 22px; border-radius: 6px; color: #0d6efd; text-decoration: none; }
    .pill.active { background: #0d6efd; color: #fff; padding-right: 21px; }
    .badge { display: inline-block; padding: 0 10px; border-radius: 15px; background: #6c757d; color: #fff; font-size: 19px; font-weight: 700; line-height: 30px; }
    .pill .badge { margin-top: 4px; }
    .card { border: 1px solid #dfdfdf; border-radius: 6px; overflow: hidden; }
    .body { padding: 25px 23px 23px; }
    .title { font-size: 29px; font-weight: 500; margin-bottom: 12px; }
    .text { line-height: 37px; }
    .place { display: flex; align-items: center; gap: 8px; margin-top: 35px; color: #6c757d; }
    .place svg { width: 18px; height: 24px; margin-left: 2px; }
    .footer { display: flex; gap: 6px; padding: 17px 23px 14px; background: #f7f7f7; border-top: 2px solid #e3e3e3; }
  `;

  render() {
    return html`
      <div class="window">
        <div class="tabstrip">
          <div class="strip-left">
            <div class="lights"><span class="light close"></span><span class="light min"></span><span class="light max"></span></div>
          </div>
          <div class="tab"></div>
          <button class="icon newtab" aria-label="New tab">
            <svg viewBox="0 0 28 28" stroke="#3c4043" stroke-width="4" stroke-linecap="round"><path d="M4 14h20M14 4v20" /></svg>
          </button>
        </div>
        <div class="toolbar">
          <button class="icon" aria-label="Back">
            <svg viewBox="0 0 28 28" fill="none" stroke="#5f6368" stroke-width="2.800" stroke-linecap="round" stroke-linejoin="round"><path d="M25.500 14H2.500M14 2.500L2.500 14 14 25.500" /></svg>
          </button>
          <button class="icon" aria-label="Forward">
            <svg viewBox="0 0 28 28" fill="none" stroke="#bababc" stroke-width="2.800" stroke-linecap="round" stroke-linejoin="round"><path d="M2.500 14h23M14 2.500L25.500 14 14 25.500" /></svg>
          </button>
          <button class="icon" aria-label="Reload">
            <svg viewBox="0 0 28 28"><path d="M23 6.500A11.500 11.500 0 1 0 25 18" fill="none" stroke="#5f6368" stroke-width="3" stroke-linecap="round" /><path d="M27.500 1v11.500H16.500z" fill="#5f6368" /></svg>
          </button>
          <input class="address" type="text" aria-label="Address" />
          <button class="icon" aria-label="Menu">
            <svg viewBox="0 0 28 28" fill="#5f6368"><circle cx="14" cy="4" r="3" /><circle cx="14" cy="14" r="3" /><circle cx="14" cy="24" r="3" /></svg>
          </button>
        </div>

        <nav class="navbar">
          <a class="brand" href="#home">UK Shopper</a>
          <a href="#login">Login</a>
          <a href="#register">Register</a>
        </nav>

        <main class="page">
          <section class="panel">
            <form @submit=${(e: Event) => e.preventDefault()}>
              <h2 class="heading strong">Filters</h2>
              <div class="field">
                <label for="search">Search</label>
                <input id="search" class="control" type="text" value="carpet" />
              </div>
              <div class="field">
                <label for="category">Category</label>
                <span class="choice">
                  <select id="category" class="control"><option>All</option></select>
                  <svg viewBox="0 0 18 16" fill="none" stroke="#343a40" stroke-width="2.600" stroke-linecap="round" stroke-linejoin="round"><path d="M2.500 4L9 11.500 15.500 4" /></svg>
                </span>
              </div>
              <div class="field">
                <label for="location">Location</label>
                <div class="joined">
                  <input id="location" class="control" type="text" placeholder="City or postal code" />
                  <button class="button" type="button">Use my location</button>
                </div>
              </div>
              <fieldset class="distance">
                <legend class="heading">Distance</legend>
                ${[25, 50, 100].map(
                  (km) => html`<label class="radio"><input type="radio" name="distance" value=${km} />${km}km</label>`
                )}
              </fieldset>
              <div class="actions">
                <button class="button filled" type="submit">Search</button>
                <button class="button" type="reset">Clear</button>
              </div>
            </form>
            <shop-map></shop-map>
          </section>

          <section class="results">
            <nav class="tabs">
              <a class="pill active" href="#businesses">Businesses<span class="badge">1</span></a>
              <a class="pill" href="#products">Products<span class="badge">2</span></a>
            </nav>
            <article class="card">
              <div class="body">
                <h3 class="title">Kingsbury Carpets</h3>
                <p class="text">Sed augue massa, tristique nec pharetra eget, suscipit cursus nulla. Vivamus scelerisque urna sit amet ultricies imperdiet. Fusce ultricies pretium velit, eu auctor augue malesuada sed. Sed suscipit nisl varius odio hendrerit, a posuere nunc ornare. Aenean et erat ut nulla eleifend tincidunt.</p>
                <div class="place">
                  <svg viewBox="0 0 18 24" fill="none" stroke="#6c757d" stroke-width="1.500"><path d="M9 22.500C5 17 1.500 12.800 1.500 8.900a7.500 7.700 0 0 1 15 0C16.500 12.800 13 17 9 22.500z" /><ellipse cx="9" cy="9" rx="3.600" ry="4" /></svg>
                  <span>Erdington</span>
                </div>
              </div>
              <div class="footer"><span class="badge">Home &amp; Garden</span><span class="badge">Business Services</span></div>
            </article>
          </section>
        </main>
      </div>
    `;
  }
}
